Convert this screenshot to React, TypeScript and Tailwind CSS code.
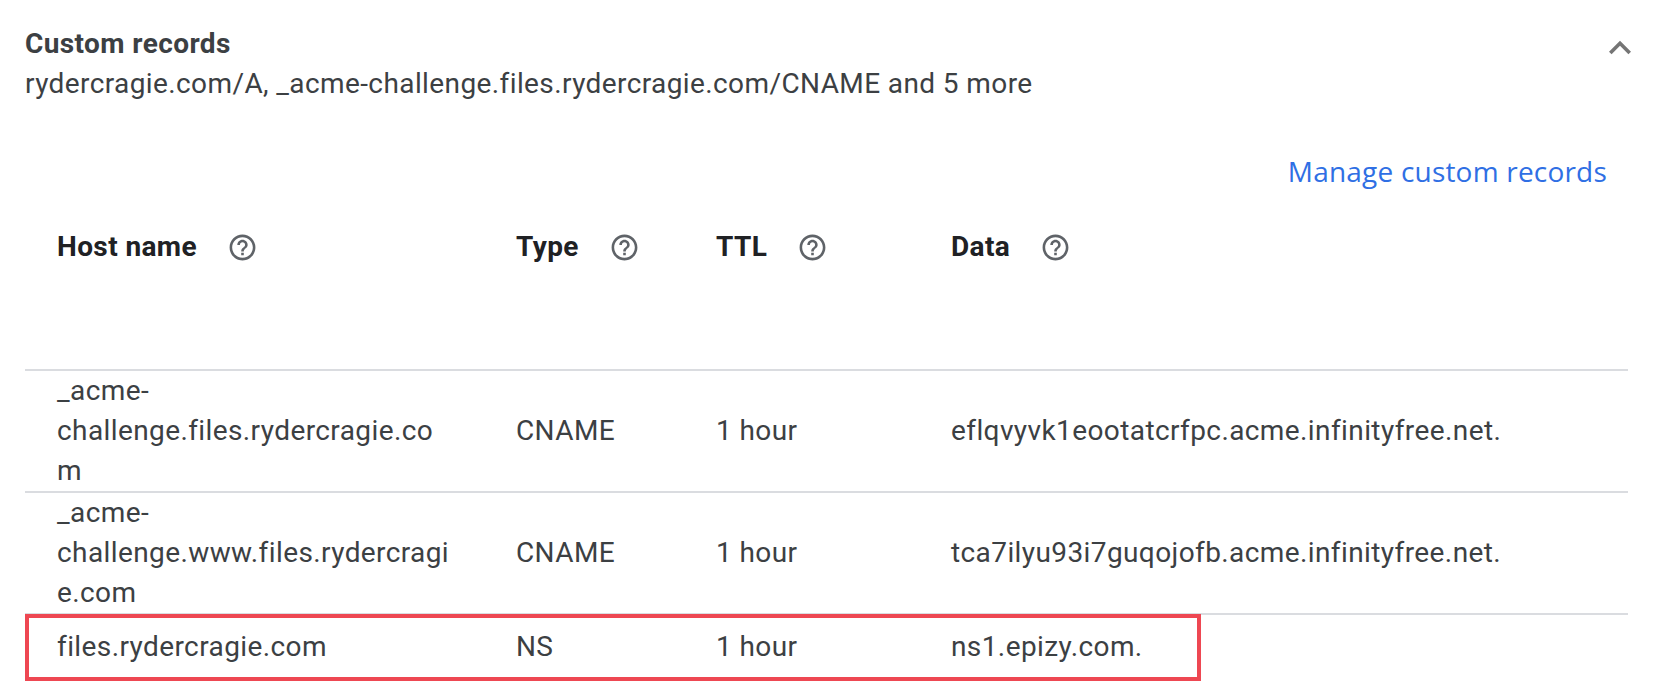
const columns = ["Host name", "Type", "TTL", "Data"];

const records = [
  {
    host: "_acme-challenge.files.rydercragie.com",
    type: "CNAME",
    ttl: "1 hour",
    data: "eflqvyvk1eootatcrfpc.acme.infinityfree.net.",
  },
  {
    host: "_acme-challenge.www.files.rydercragie.com",
    type: "CNAME",
    ttl: "1 hour",
    data: "tca7ilyu93i7guqojofb.acme.infinityfree.net.",
  },
  {
    host: "files.rydercragie.com",
    type: "NS",
    ttl: "1 hour",
    data: "ns1.epizy.com.",
  },
];

function HelpIcon() {
  return (
    <svg className="ml-[30px] h-[31px] w-[31px] shrink-0 fill-[#5f6368]" viewBox="0 0 24 24">
      <path d="M11 18h2v-2h-2v2zm1-16C6.48 2 2 6.48 2 12s4.48 10 10 10 10-4.48 10-10S17.52 2 12 2zm0 18c-4.41 0-8-3.59-8-8s3.59-8 8-8 8 3.59 8 8-3.59 8-8 8zm0-14c-2.21 0-4 1.79-4 4h2c0-1.1.9-2 2-2s2 .9 2 2c0 2-3 1.75-3 5h2c0-2.25 3-2.5 3-5 0-2.21-1.79-4-4-4z" />
    </svg>
  );
}

export default function App() {
  return (
    <div className="h-[684px] w-[1665px] overflow-hidden bg-white pl-[25px] pr-[37px] pt-[24px] font-['Roboto',sans-serif] text-[28px] leading-[40px] tracking-[0.4px] text-[#3c4043]">
      <div className="flex items-start justify-between">
        <div>
          <div className="font-bold">Custom records</div>
          <div>rydercragie.com/A, _acme-challenge.files.rydercragie.com/CNAME and 5 more</div>
        </div>
        <svg className="-mr-[14px] mt-[2px] h-11 w-11 fill-[#757575]" viewBox="0 0 24 24">
          <path d="M12 8l-6 6 1.41 1.41L12 10.83l4.59 4.58L18 14z" />
        </svg>
      </div>

      <div className="mt-[47px] pr-[21px] text-right font-['Open_Sans',sans-serif] text-[28px] font-medium tracking-[0.2px] text-[#2f6fe4]">
        Manage custom records
      </div>

      <table className="mt-[15px] w-full table-fixed border-collapse">
        <colgroup>
          <col className="w-[459px]" />
          <col className="w-[200px]" />
          <col className="w-[235px]" />
          <col />
        </colgroup>
        <thead>
          <tr className="h-[164px] align-top">
            {columns.map((column) => (
              <th className="pl-8 pt-[21px] text-left font-bold text-[#202124]" key={column}>
                <div className="flex items-center">
                  {column}
                  <HelpIcon />
                </div>
              </th>
            ))}
          </tr>
        </thead>
        <tbody>
          {records.map((record, index) => (
            <tr className="relative h-[65px] border-t-2 border-[#dadce0]" key={record.host}>
              <td className="py-0 pl-8 pr-[29px] [overflow-wrap:anywhere]">
                {record.host}
              </td>
              <td className="pl-8">{record.type}</td>
              <td className="pl-8">{record.ttl}</td>
              <td className="pl-8">{record.data}</td>
              {index === 2 ? (
                <td className="absolute left-0 top-[-2px] h-[67px] w-[1176px] border-4 border-[#ee4752] p-0" />
              ) : null}
            </tr>
          ))}
        </tbody>
      </table>
    </div>
  );
}
